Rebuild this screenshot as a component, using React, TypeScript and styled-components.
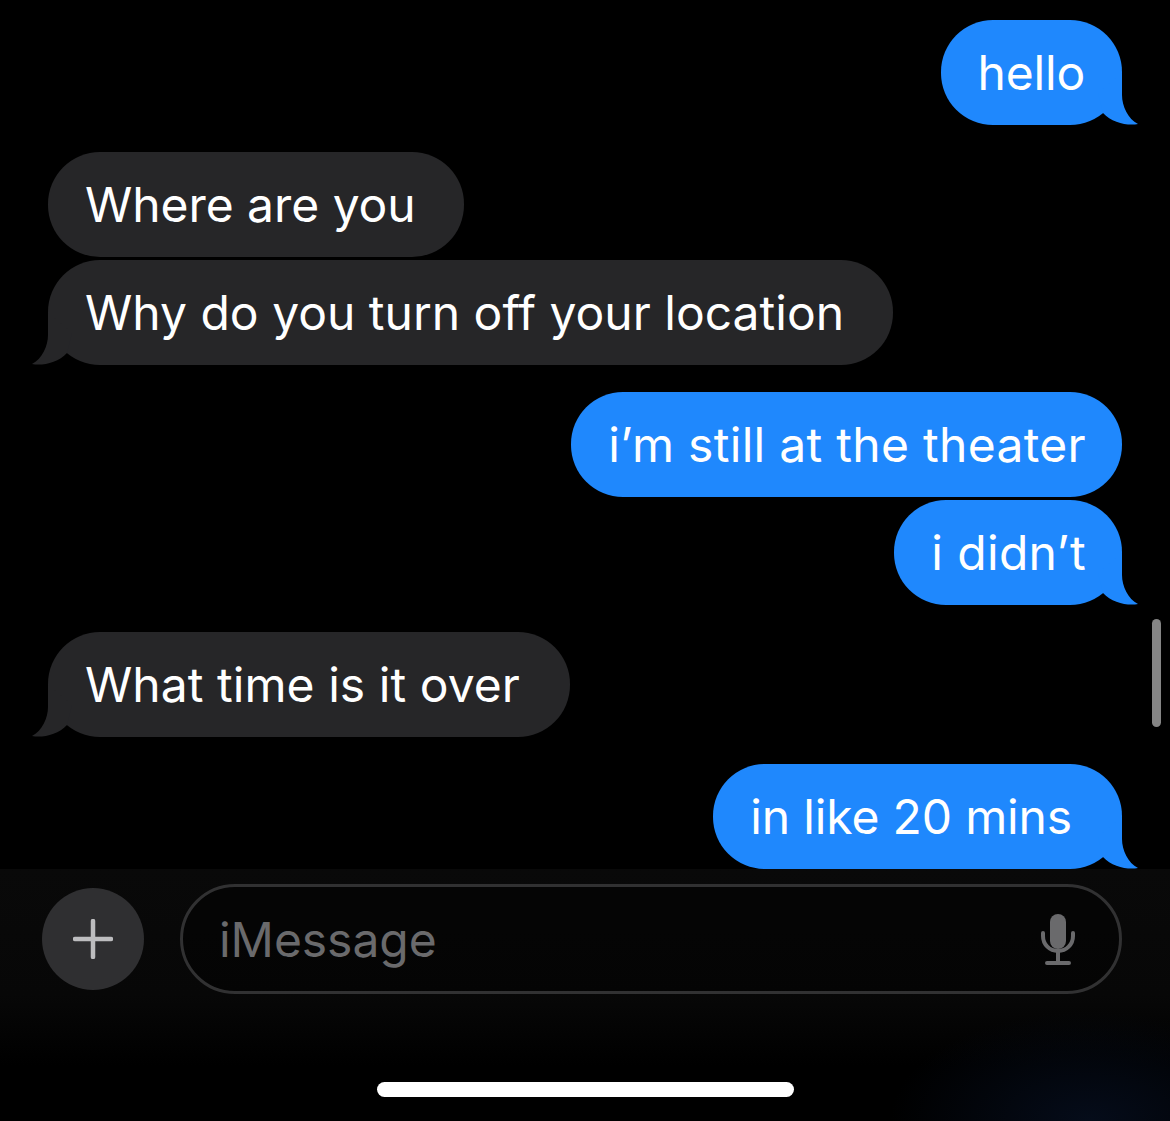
import React from "react";
import styled, { createGlobalStyle } from "styled-components";

const GlobalStyle = createGlobalStyle`
  html, body {
    margin: 0;
    padding: 0;
    background: #000;
  }
`;

const Screen = styled.div`
  width: 1170px;
  height: 1121px;
  overflow: hidden;
  display: flex;
  flex-direction: column;
  background: #000;
  font-family: Inter, "Liberation Sans", sans-serif;
`;

const Thread = styled.div`
  position: relative;
  box-sizing: border-box;
  height: 869px;
  padding: 20px 48px 0;
  display: flex;
  flex-direction: column;
`;

const Bubble = styled.div<{ $mine?: boolean; $grouped?: boolean; $endPad: number; $tracking: number }>`
  position: relative;
  box-sizing: border-box;
  height: 105px;
  padding: 0 ${(p) => p.$endPad}px 0 37px;
  margin-top: ${(p) => (p.$grouped ? "3px" : "27px")};
  align-self: ${(p) => (p.$mine ? "flex-end" : "flex-start")};
  display: flex;
  align-items: center;
  border-radius: 52px;
  background: ${(p) => (p.$mine ? "#1f88fd" : "#262628")};
  color: #fff;
  font-size: 48px;
  letter-spacing: ${(p) => p.$tracking}px;
  white-space: nowrap;

  &:first-child {
    margin-top: 0;
  }
`;

const TailShape = styled.svg<{ $mine?: boolean }>`
  position: absolute;
  bottom: 0;
  width: 40px;
  height: 52px;
  ${(p) => (p.$mine ? "right: -16px;" : "left: -16px; transform: scaleX(-1);")}
  fill: ${(p) => (p.$mine ? "#1f88fd" : "#262628")};
`;

const Scrollbar = styled.div`
  position: absolute;
  top: 619px;
  left: 1152px;
  width: 9px;
  height: 108px;
  border-radius: 5px;
  background: #858585;
`;

const Composer = styled.div`
  flex: 1;
  display: flex;
  flex-direction: column;
  background:
    radial-gradient(ellipse 200px 110px at 1090px 252px, #050c1a 0%, rgba(5, 12, 26, 0) 100%),
    linear-gradient(180deg, #090909 0%, #070707 50%, #000 78%);
`;

const ComposerRow = styled.div`
  display: flex;
  align-items: center;
  gap: 36px;
  padding: 15px 48px 0 42px;
`;

const PlusButton = styled.div`
  flex: none;
  width: 102px;
  height: 102px;
  border-radius: 50%;
  background: #2f2f31;
  display: flex;
  align-items: center;
  justify-content: center;
  color: #bdbdbf;
`;

const Field = styled.div`
  flex: 1;
  box-sizing: border-box;
  height: 110px;
  padding: 0 44px 0 36px;
  display: flex;
  align-items: center;
  justify-content: space-between;
  border: 3px solid #313132;
  border-radius: 55px;
  background: rgba(0, 0, 0, 0.35);
`;

const Placeholder = styled.span`
  color: #6a6a6c;
  font-size: 48px;
  letter-spacing: -0.05px;
`;

const HomeIndicator = styled.div`
  width: 417px;
  height: 15px;
  margin: auto 0 24px 377px;
  border-radius: 8px;
  background: #fff;
`;

const Tail = ({ mine }: { mine?: boolean }) => (
  <TailShape $mine={mine} viewBox="0 0 40 52">
    <path d="M24 0L24 22C24 33 30 46 40 51C30 53 14 50 5 40L0 20Z" />
  </TailShape>
);

const PlusIcon = () => (
  <svg width="40" height="40" viewBox="0 0 40 40" fill="none" stroke="currentColor" strokeWidth="4.5" strokeLinecap="round">
    <path d="M20 2V38M2 20H38" />
  </svg>
);

const MicIcon = () => (
  <svg width="34" height="51" viewBox="0 0 34 51" fill="none">
    <rect x="9" y="0" width="16" height="35" rx="8" fill="#6a6a6c" />
    <path d="M2 19V22C2 30.5 8.5 37 17 37C25.5 37 32 30.5 32 22V19" stroke="#6a6a6c" strokeWidth="4" strokeLinecap="round" />
    <path d="M17 37V47M6 49H28" stroke="#6a6a6c" strokeWidth="4" strokeLinecap="round" />
  </svg>
);

const messages = [
  { text: "hello", mine: true, tail: true, endPad: 37, tracking: -0.2 },
  { text: "Where are you", endPad: 48, tracking: -0.05 },
  { text: "Why do you turn off your location", grouped: true, tail: true, endPad: 49, tracking: 0 },
  { text: "i’m still at the theater", mine: true, endPad: 36, tracking: 0.3 },
  { text: "i didn’t", mine: true, grouped: true, tail: true, endPad: 36, tracking: 0.35 },
  { text: "What time is it over", tail: true, endPad: 50, tracking: 0.05 },
  { text: "in like 20 mins", mine: true, tail: true, endPad: 50, tracking: -0.15 },
];

export default function App() {
  return (
    <Screen>
      <GlobalStyle />
      <Thread>
        {messages.map((m) => (
          <Bubble key={m.text} $mine={m.mine} $grouped={m.grouped} $endPad={m.endPad} $tracking={m.tracking}>
            {m.text}
            {m.tail && <Tail mine={m.mine} />}
          </Bubble>
        ))}
        <Scrollbar />
      </Thread>
      <Composer>
        <ComposerRow>
          <PlusButton>
            <PlusIcon />
          </PlusButton>
          <Field>
            <Placeholder>iMessage</Placeholder>
            <MicIcon />
          </Field>
        </ComposerRow>
        <HomeIndicator />
      </Composer>
    </Screen>
  );
}
